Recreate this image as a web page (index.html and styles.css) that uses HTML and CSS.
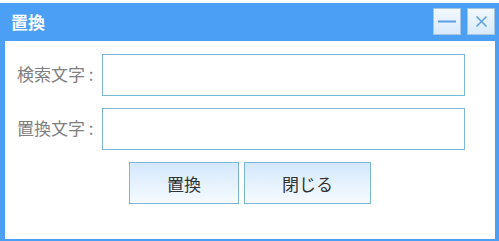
FILE: index.html
```html
<!DOCTYPE html>
<html lang="ja">
<head>
<meta charset="utf-8">
<title>置換</title>
<link rel="stylesheet" href="styles.css">
</head>
<body>
<div class="window">
  <div class="titlebar">
    <span class="title">置換</span>
    <div class="tools">
      <button class="tool" aria-label="最小化">
        <svg width="18" height="3" viewBox="0 0 18 3"><rect x="0" y="0.5" width="18" height="2" fill="#5b9fe3"/></svg>
      </button>
      <button class="tool" aria-label="閉じる">
        <svg width="11" height="11" viewBox="0 0 11 11"><path d="M0.5 0.5 L10.5 10.5 M10.5 0.5 L0.5 10.5" stroke="#5b9fe3" stroke-width="1.5" fill="none"/></svg>
      </button>
    </div>
  </div>
  <div class="content">
    <div class="form">
      <label class="label">検索文字 :</label>
      <input class="field" type="text">
      <label class="label">置換文字 :</label>
      <input class="field" type="text">
    </div>
    <div class="actions">
      <button class="btn">置換</button>
      <button class="btn">閉じる</button>
    </div>
  </div>
</div>
</body>
</html>
```

FILE: styles.css
```css
html, body {
  margin: 0;
  padding: 0;
  background: #ffffff;
}
body {
  font-family: "Noto Sans CJK JP", "Noto Sans", sans-serif;
  overflow: hidden;
}
.window {
  margin-top: 3px;
  background: #4ba0f5;
  padding: 0 4px 4px 5px;
}
.titlebar {
  height: 38px;
  box-sizing: border-box;
  padding-top: 5px;
  display: flex;
  align-items: flex-start;
  justify-content: space-between;
}
.title {
  color: #ffffff;
  font-weight: bold;
  font-size: 17px;
  line-height: 27px;
  margin-left: 6px;
}
.tools {
  display: flex;
  gap: 6px;
}
.tool {
  width: 28px;
  height: 27px;
  box-sizing: border-box;
  border: 1px solid #a6c4e4;
  background: linear-gradient(#f2f8ff, #d9eafc);
  padding: 0;
  display: flex;
  align-items: center;
  justify-content: center;
}
.content {
  background: #ffffff;
  height: 198px;
  box-sizing: border-box;
  padding-top: 13px;
}
.form {
  display: grid;
  grid-template-columns: 97px 363px;
  row-gap: 12px;
  align-items: center;
}
.label {
  padding-left: 12px;
  padding-bottom: 3px;
  font-size: 17px;
  color: #808080;
  white-space: nowrap;
}
.field {
  height: 42px;
  box-sizing: border-box;
  border: 1px solid #7ab7db;
  margin: 0;
  padding: 0 6px;
  font: inherit;
  outline: none;
}
.actions {
  margin-top: 12px;
  display: flex;
  justify-content: center;
  gap: 5px;
}
.btn {
  height: 42px;
  box-sizing: border-box;
  padding: 0 37px;
  border: 1px solid #7ab7db;
  background: linear-gradient(#d3e8fc, #f6fbff);
  font-family: inherit;
  font-size: 17px;
  color: #333333;
}
```
